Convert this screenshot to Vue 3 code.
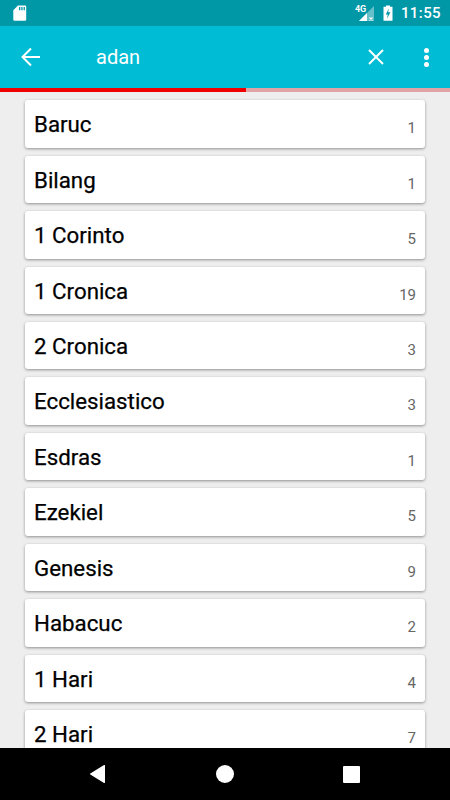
<template>
  <div class="screen">
    <div class="status-bar">
      <svg class="sd-icon" width="14" height="16" viewBox="0 0 14 16">
        <path fill="#fff" d="M5 0.5H12a1.2 1.2 0 0 1 1.2 1.2V14.5a1.2 1.2 0 0 1-1.2 1.2H1.5a1.2 1.2 0 0 1-1.2-1.2V5.2Z" />
        <path fill="#0097a7" d="M6 2h1.3v3.2H6zM8.3 2h1.3v3.2H8.3zM10.6 2h1.3v3.2h-1.3z" />
      </svg>
      <div class="status-right">
        <div class="signal">
          <span class="net">4G</span>
          <svg width="15" height="15" viewBox="0 0 15 15">
            <path fill="#fff" opacity="0.4" d="M15 0V15H0Z" />
            <path fill="#fff" d="M8 7V15H0Z" />
            <path stroke="#fff" stroke-width="1.1" fill="none" d="M10.5 11.5l3 3M13.5 11.5l-3 3" />
          </svg>
        </div>
        <svg class="battery" width="10" height="16" viewBox="0 0 10 16">
          <path fill="#fff" d="M3 0.5H7V1.8H9.5V15.7H0.5V1.8H3Z" />
          <path fill="#0097a7" d="M5.8 3.5L2.8 9.5H4.8L4 13.8L7.4 7.2H5.2Z" />
        </svg>
        <span class="clock">11:55</span>
      </div>
    </div>

    <div class="toolbar">
      <svg class="back" width="24" height="24" viewBox="0 0 24 24">
        <path fill="none" stroke="#fff" stroke-width="2" d="M21 12H4M12 3.5L3.5 12l8.5 8.5" />
      </svg>
      <span class="query">adan</span>
      <svg class="clear" width="24" height="24" viewBox="0 0 24 24">
        <path fill="none" stroke="#fff" stroke-width="2" d="M5 5l14 14M19 5L5 19" />
      </svg>
      <div class="more">
        <i></i><i></i><i></i>
      </div>
    </div>

    <div class="progress">
      <div class="progress-fill" :style="{ width: progress + '%' }"></div>
    </div>

    <div class="results">
      <div v-for="book in books" :key="book.name" class="card">
        <span class="name">{{ book.name }}</span>
        <span class="count">{{ book.count }}</span>
      </div>
    </div>

    <div class="nav-bar">
      <svg width="18" height="20" viewBox="0 0 18 20"><path fill="#fff" d="M16 1.5V18.5a0.6 0.6 0 0 1-1 .4L1.3 10.6a0.7 0.7 0 0 1 0-1.2L15 1.1a0.6 0.6 0 0 1 1 .4Z" /></svg>
      <span class="home"></span>
      <span class="recent"></span>
    </div>
  </div>
</template>

<script setup>
const progress = 54.6

const books = [
  { name: 'Baruc', count: 1 },
  { name: 'Bilang', count: 1 },
  { name: '1 Corinto', count: 5 },
  { name: '1 Cronica', count: 19 },
  { name: '2 Cronica', count: 3 },
  { name: 'Ecclesiastico', count: 3 },
  { name: 'Esdras', count: 1 },
  { name: 'Ezekiel', count: 5 },
  { name: 'Genesis', count: 9 },
  { name: 'Habacuc', count: 2 },
  { name: '1 Hari', count: 4 },
  { name: '2 Hari', count: 7 },
]
</script>

<style scoped>
.screen {
  width: 450px;
  height: 800px;
  display: flex;
  flex-direction: column;
  overflow: hidden;
  background: #eeeeee;
  font-family: Roboto, "Liberation Sans", sans-serif;
}

.status-bar {
  height: 26px;
  flex: none;
  display: flex;
  align-items: center;
  justify-content: space-between;
  padding: 0 9px 0 13px;
  background: #0097a7;
}

.sd-icon {
  margin-top: -1px;
}

.status-right {
  display: flex;
  align-items: center;
}

.signal {
  position: relative;
  width: 15px;
  height: 15px;
  margin-right: 9px;
  margin-top: 1px;
}

.signal svg {
  display: block;
}

.net {
  position: absolute;
  left: -4px;
  top: -1px;
  font-size: 9px;
  line-height: 9px;
  font-weight: 700;
  color: #fff;
}

.battery {
  margin-right: 8px;
}

.clock {
  font-size: 15px;
  font-weight: 500;
  letter-spacing: 0.4px;
  color: #fff;
}

.toolbar {
  height: 62px;
  flex: none;
  display: flex;
  align-items: center;
  padding: 0 21px 0 19px;
  background: #00bcd4;
}

.query {
  margin-left: 53px;
  flex: 1;
  font-size: 20px;
  color: #fff;
}

.clear {
  margin-right: 36px;
}

.more {
  display: flex;
  flex-direction: column;
  gap: 2px;
}

.more i {
  width: 5px;
  height: 5px;
  border-radius: 50%;
  background: #fff;
}

.progress {
  height: 4px;
  flex: none;
  background: #e2a3a6;
}

.progress-fill {
  height: 100%;
  background: #f00000;
}

.results {
  flex: 1;
  min-height: 0;
  overflow: hidden;
  display: flex;
  flex-direction: column;
  gap: 8px;
  padding: 8.2px 25px 0;
}

.card {
  height: 47.45px;
  flex: none;
  box-sizing: border-box;
  display: flex;
  justify-content: space-between;
  padding: 0 9px;
  background: #fff;
  border-radius: 3px;
  box-shadow: 0 1px 3px rgba(0, 0, 0, 0.4);
}

.name {
  font-size: 22.3px;
  line-height: 49px;
  color: #000;
  -webkit-text-stroke: 0.25px #000;
}

.count {
  font-size: 15px;
  line-height: 15px;
  margin-top: 21px;
  color: #666;
}

.nav-bar {
  height: 52px;
  flex: none;
  display: flex;
  align-items: center;
  justify-content: center;
  gap: 109px;
  padding-right: 1px;
  background: #000;
}

.home {
  width: 18px;
  height: 18px;
  border-radius: 50%;
  background: #fff;
}

.recent {
  width: 17px;
  height: 17px;
  border-radius: 1px;
  background: #fff;
}
</style>
